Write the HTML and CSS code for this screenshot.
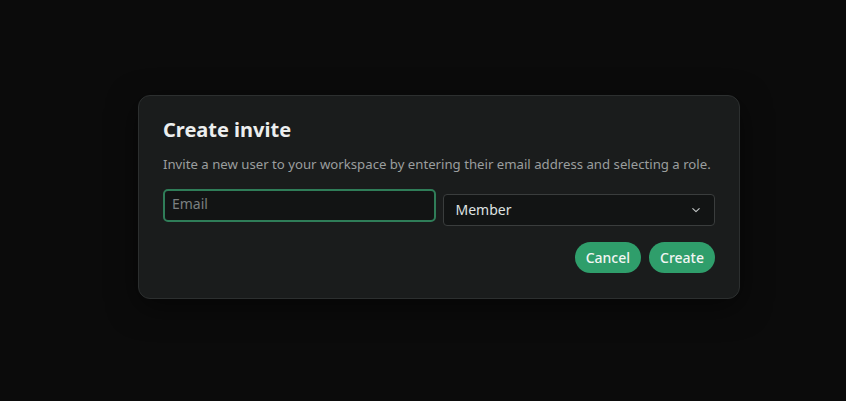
FILE: index.html
```html
<!DOCTYPE html>
<html>
<head>
<meta charset="utf-8">
<link rel="stylesheet" href="styles.css">
</head>
<body>
<div class="stage">
  <div class="dialog">
    <h2 class="title">Create invite</h2>
    <p class="desc">Invite a new user to your workspace by entering their email address and selecting a role.</p>
    <div class="fields">
      <div class="email"><span class="placeholder">Email</span></div>
      <div class="select">
        <span class="value">Member</span>
        <svg width="12" height="12" viewBox="0 0 12 12" fill="none" stroke="#c4c8c8" stroke-width="1.1" stroke-linecap="round" stroke-linejoin="round"><path d="M2.8 4.6 6 7.6 9.2 4.6"/></svg>
      </div>
    </div>
    <div class="actions">
      <button class="btn">Cancel</button>
      <button class="btn">Create</button>
    </div>
  </div>
</div>
</body>
</html>
```
FILE: styles.css
```css
* { box-sizing: border-box; }
html, body { margin: 0; height: 100%; }
body {
  background: #0b0b0b;
  font-family: "Noto Sans", sans-serif;
  color: #e6e8e8;
}
.stage {
  width: 846px;
  height: 401px;
  padding-top: 95px;
  padding-left: 138px;
}
.dialog {
  width: 602px;
  height: 204px;
  background: #1a1c1c;
  border: 1px solid #2c2f2f;
  border-radius: 12px;
  padding: 20px 24px 24px 24px;
  box-shadow: 0 8px 30px rgba(0,0,0,0.5);
}
.title {
  margin: 0;
  font-size: 20px;
  font-weight: 700;
  line-height: 28px;
  color: #eceeee;
}
.desc {
  margin: 10px 0 0 0;
  font-size: 13.2px;
  line-height: 20px;
  color: #9a9e9e;
  white-space: nowrap;
}
.fields {
  display: flex;
  align-items: flex-start;
  gap: 7px;
  margin-top: 15px;
}
.email {
  width: 274px;
  height: 33px;
  border: 2px solid #2f7d58;
  border-radius: 5px;
  background: #121414;
  padding: 0 7px;
  display: flex;
  align-items: center;
}
.placeholder {
  font-size: 14px;
  color: #7b8080;
  margin-top: -4px;
}
.select {
  width: 272px;
  height: 32px;
  margin-top: 5px;
  border: 1px solid #3a3d3d;
  border-radius: 4px;
  background: #121414;
  padding: 0 12px 0 11px;
  display: flex;
  align-items: center;
  justify-content: space-between;
  font-size: 14px;
  color: #dfe2e2;
}
.value { margin-top: -2px; }
.actions {
  display: flex;
  justify-content: flex-end;
  gap: 8px;
  margin-top: 16px;
}
.btn {
  height: 31px;
  border: none;
  border-radius: 16px;
  background: #2f9e6b;
  color: #f2f5f4;
  font-family: "Noto Sans", sans-serif;
  font-size: 14px;
  font-weight: 500;
  padding: 0 11px;
}
```
